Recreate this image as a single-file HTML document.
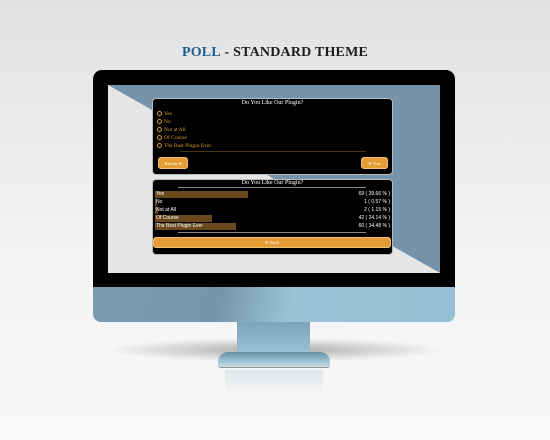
<!DOCTYPE html>
<html><head><meta charset="utf-8"><style>
*{margin:0;padding:0;box-sizing:border-box}
body{width:550px;height:440px;overflow:hidden;position:relative;background:linear-gradient(#e2e2e2,#f4f4f4 60%,#f8f8f8);font-family:"Liberation Serif",serif}
.abs{position:absolute}
.title{left:0;width:550px;top:45px;text-align:center;font-weight:bold;font-size:14px;color:#1d1d1d;letter-spacing:0.2px}
.title b{color:#1f5e91}
.mon{left:93px;top:70px;width:362px;height:224px;background:#000;border-radius:9px 9px 0 0}
.chin{left:93px;top:287px;width:362px;height:35px;border-radius:0 0 8px 8px;background:linear-gradient(100deg,#7b9bb0 0%,#7596ad 35%,#9cc3d8 55%,#98c0d5 100%)}
.screen{left:108px;top:85px;width:332px;height:188px;background:#e6e6e6;overflow:hidden}
.card{background:#000;border:1px solid #bbb;border-radius:4px;left:152px;width:241px}
.ct{color:#fff;font-size:6px;text-align:center}
.opt{color:#e09a2e;font-size:5.5px;left:157px}
.opt i{display:inline-block;width:5px;height:5px;border:1.2px solid #e09a2e;border-radius:50%;vertical-align:-1px;margin-right:2px}
.btn{background:#e39d34;border-radius:3px;color:#fff;font-size:4.5px;text-align:center;line-height:12px;border:1px solid #f0c070}
.row{left:155px;width:235px;height:7px;font-family:"Liberation Sans",sans-serif;font-size:5px;color:#fff;line-height:7px}
.bar{position:absolute;left:0;top:0;height:7px;background:#6a4a1d}
.row span{position:relative;padding-left:1px}
.row em{position:absolute;right:0;font-style:normal}
</style></head><body>
<div class="abs title"><b>POLL</b> - STANDARD THEME</div>
<div class="abs" style="left:105px;top:338px;width:340px;height:24px;border-radius:50%;background:radial-gradient(ellipse,rgba(0,0,0,.32),rgba(0,0,0,0) 70%)"></div>
<div class="abs mon"></div>
<div class="abs chin"></div>
<div class="abs" style="left:237px;top:322px;width:73px;height:38px;background:linear-gradient(#7ea3ba,#94bdd2 70%,#a8d0e2)"></div>
<div class="abs" style="left:218px;top:352px;width:112px;height:16px;border-radius:10px 10px 3px 3px;background:linear-gradient(#6c8fa5,#9cc3d8 60%,#c9dbe4);border-bottom:1px solid #999"></div>
<div class="abs" style="left:225px;top:370px;width:98px;height:25px;background:linear-gradient(rgba(160,180,190,.25),rgba(240,240,240,0))"></div>
<div class="abs screen"><svg width="332" height="188" style="position:absolute;left:0;top:0"><polygon points="0,0 332,0 332,188" fill="#7593ab"/></svg></div>
<div class="abs card" style="top:98px;height:77px"></div>
<div class="abs ct" style="left:152px;width:241px;top:100px">Do You Like Our Plugin?</div>
<div class="abs opt" style="top:111px"><i></i>Yes</div>
<div class="abs opt" style="top:119px"><i></i>No</div>
<div class="abs opt" style="top:127px"><i></i>Not at All</div>
<div class="abs opt" style="top:135px"><i></i>Of Course</div>
<div class="abs opt" style="top:143px"><i></i>The Best Plugin Ever</div>
<div class="abs" style="left:180px;top:151px;width:186px;height:1px;background:#4a3412"></div>
<div class="abs btn" style="left:158px;top:157px;width:30px;height:12px">Results &#9679;</div>
<div class="abs btn" style="left:361px;top:157px;width:27px;height:12px">&#10148; Vote</div>
<div class="abs card" style="top:179px;height:76px"></div>
<div class="abs ct" style="left:152px;width:241px;top:180px">Do You Like Our Plugin?</div>
<div class="abs" style="left:178px;top:187px;width:188px;height:1px;background:#888"></div>
<div class="abs row" style="top:191px"><div class="bar" style="width:93px"></div><span>Yes</span><em>69 ( 39.66 % )</em></div>
<div class="abs row" style="top:199px"><div class="bar" style="width:2px"></div><span>No</span><em>1 ( 0.57 % )</em></div>
<div class="abs row" style="top:207px"><div class="bar" style="width:3px"></div><span>Not at All</span><em>2 ( 1.15 % )</em></div>
<div class="abs row" style="top:215px"><div class="bar" style="width:57px"></div><span>Of Course</span><em>42 ( 24.14 % )</em></div>
<div class="abs row" style="top:223px"><div class="bar" style="width:81px"></div><span>The Best Plugin Ever</span><em>60 ( 34.48 % )</em></div>
<div class="abs" style="left:178px;top:232px;width:188px;height:1px;background:#888"></div>
<div class="abs btn" style="left:153px;top:237px;width:238px;height:11px;line-height:9px">&#10227; Back</div>
</body></html>
